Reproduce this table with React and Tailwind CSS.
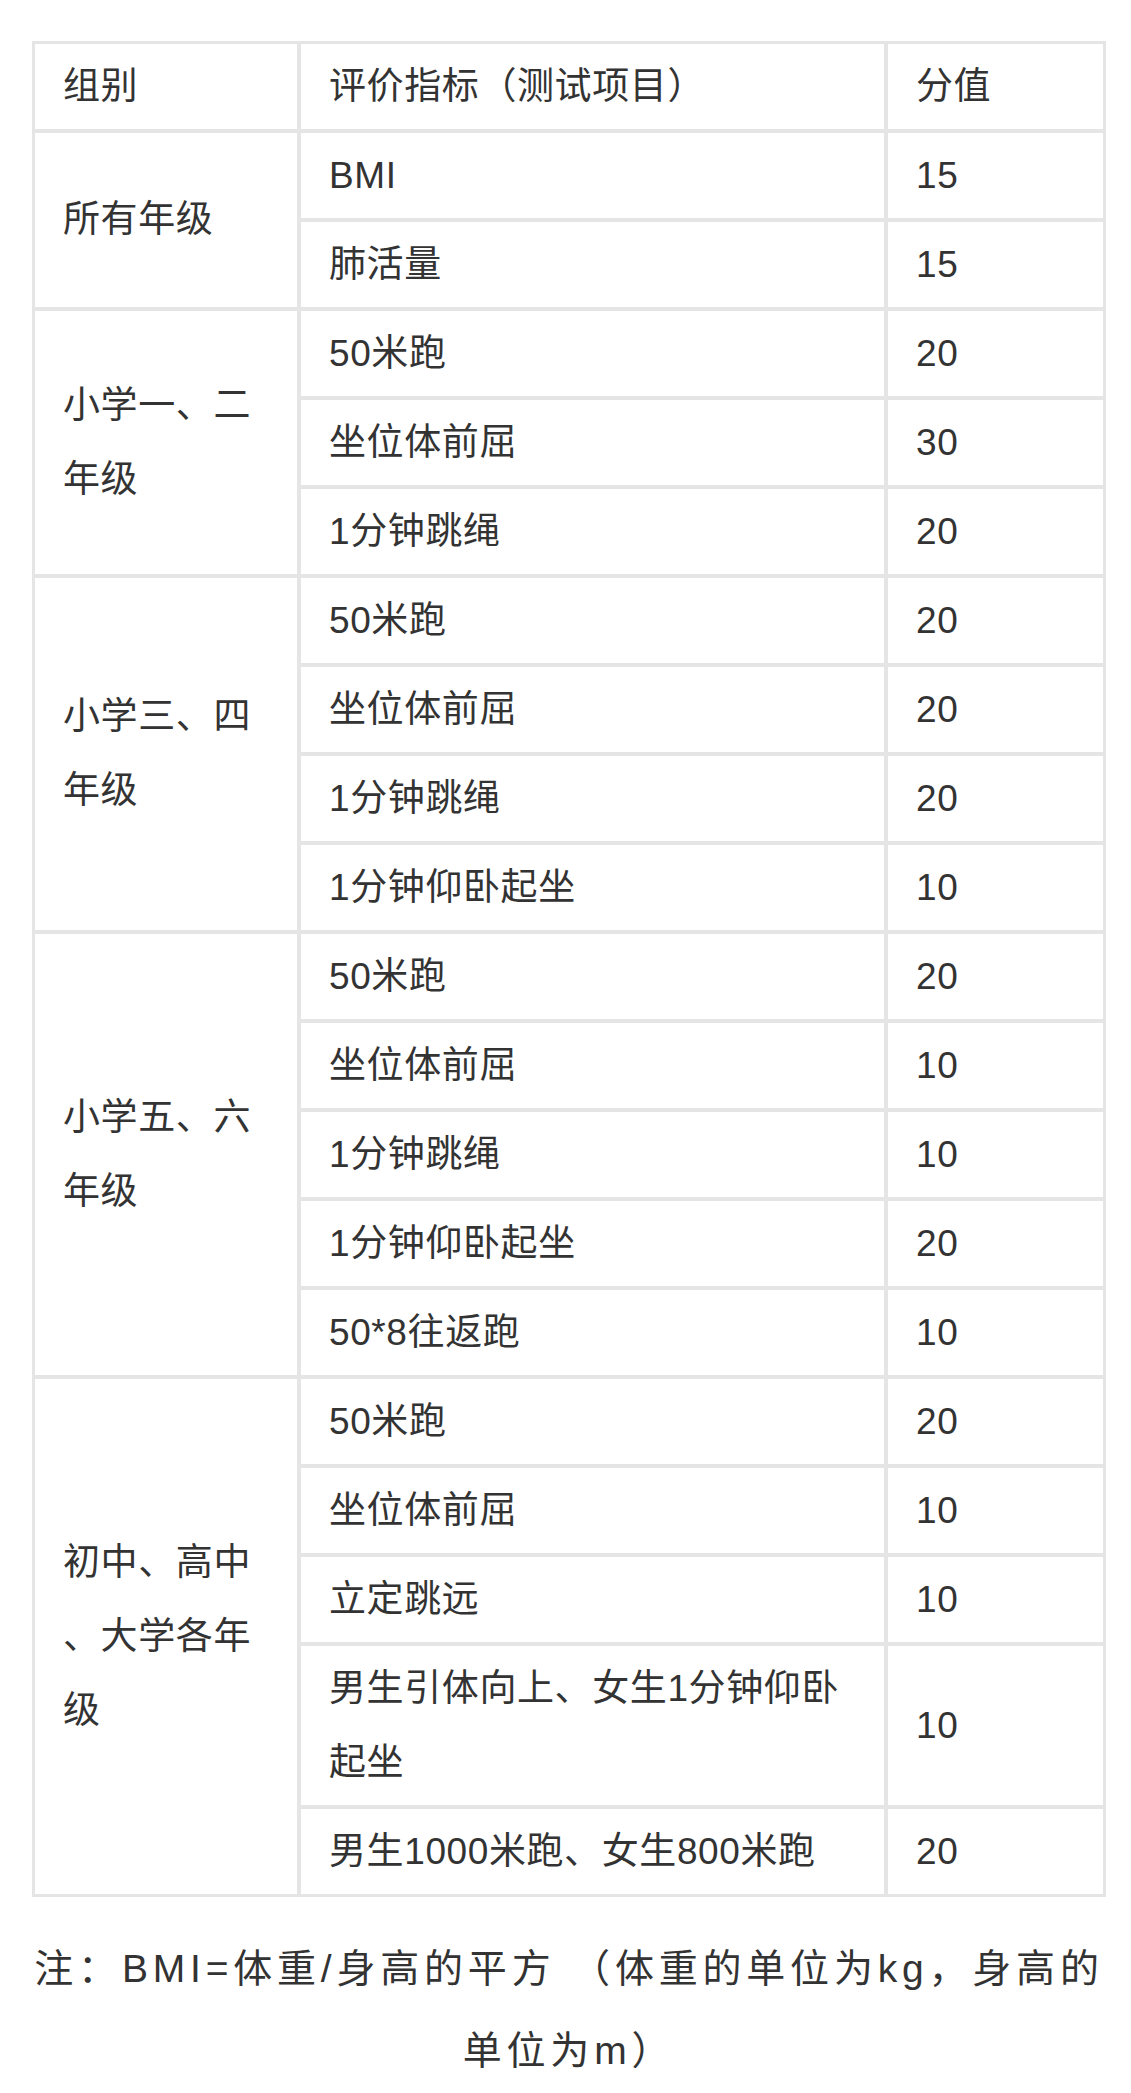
import React from "react";

const groups = [
  { name: ["所有年级"], rows: [["BMI", "15"], ["肺活量", "15"]] },
  {
    name: ["小学一、二", "年级"],
    rows: [["50米跑", "20"], ["坐位体前屈", "30"], ["1分钟跳绳", "20"]],
  },
  {
    name: ["小学三、四", "年级"],
    rows: [["50米跑", "20"], ["坐位体前屈", "20"], ["1分钟跳绳", "20"], ["1分钟仰卧起坐", "10"]],
  },
  {
    name: ["小学五、六", "年级"],
    rows: [
      ["50米跑", "20"],
      ["坐位体前屈", "10"],
      ["1分钟跳绳", "10"],
      ["1分钟仰卧起坐", "20"],
      ["50*8往返跑", "10"],
    ],
  },
  {
    name: ["初中、高中", "、大学各年", "级"],
    rows: [
      ["50米跑", "20"],
      ["坐位体前屈", "10"],
      ["立定跳远", "10"],
      [["男生引体向上、女生1分钟仰卧", "起坐"], "10"],
      ["男生1000米跑、女生800米跑", "20"],
    ],
  },
];

const cell =
  "border-2 border-[#e5e5e5] px-[28px] py-[5.5px] leading-[74px] align-middle text-left font-normal";

function Lines({ parts }) {
  const arr = Array.isArray(parts) ? parts : [parts];
  return arr.map((p, i) => (
    <React.Fragment key={i}>
      {i > 0 && <br />}
      {p}
    </React.Fragment>
  ));
}

export default function App() {
  return (
    <div
      className="bg-white text-[#333333] pt-[41px] pl-[32px] w-[1131px] min-h-[2093px]"
      style={{ fontFamily: '"Liberation Sans", "Noto Sans CJK SC", sans-serif' }}
    >
      <table className="w-[1074px] table-fixed border-separate border-spacing-0 border border-[#e5e5e5] text-[37px] tracking-[0.6px]">
        <thead>
          <tr>
            <th className={`${cell} w-[266px]`}>组别</th>
            <th className={`${cell} w-[587px]`}>评价指标（测试项目）</th>
            <th className={cell}>分值</th>
          </tr>
        </thead>
        <tbody>
          {groups.map((g, gi) =>
            g.rows.map((r, ri) => (
              <tr key={`${gi}-${ri}`}>
                {ri === 0 && (
                  <td className={cell} rowSpan={g.rows.length}>
                    <Lines parts={g.name} />
                  </td>
                )}
                <td className={cell}>
                  <Lines parts={r[0]} />
                </td>
                <td className={cell}>{r[1]}</td>
              </tr>
            ))
          )}
        </tbody>
      </table>
      <p className="w-[1074px] mt-[31px] text-center text-[39px] leading-[82px] tracking-[4.8px] whitespace-nowrap">
        注：BMI=体重/身高的平方{"\u00a0"}（体重的单位为kg，身高的
        <br />
        单位为m）
      </p>
    </div>
  );
}
